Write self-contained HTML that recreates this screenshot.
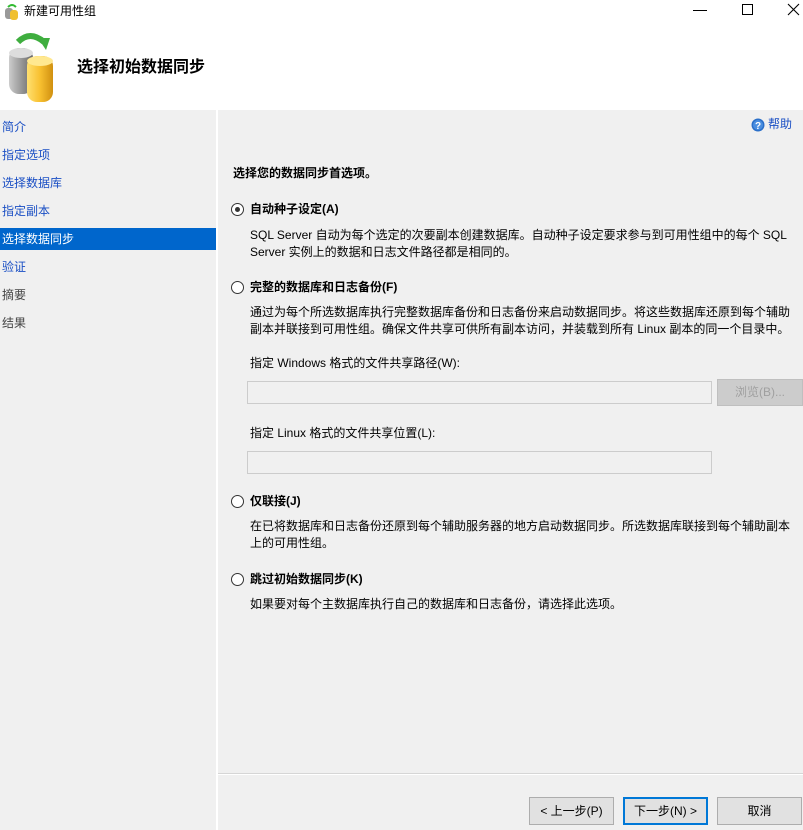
<!DOCTYPE html>
<html><head><meta charset="utf-8"><style>
*{margin:0;padding:0;box-sizing:border-box}
body{width:803px;height:830px;background:#f0f0f0;font-family:"Liberation Sans","Noto Sans CJK SC",sans-serif;font-size:12px;color:#000;position:relative;overflow:hidden}
.a{position:absolute;white-space:nowrap;line-height:17px}
.b{font-weight:bold}
.nav{position:absolute;left:2px;color:#1a4fc4;font-size:12px;line-height:17px}
.r{position:absolute;width:13px;height:13px;border:1px solid #333;border-radius:50%;background:#fff}
.box{position:absolute;border:1px solid #ccc;background:#f0f0f0}
.btn{position:absolute;top:797px;height:28px;border:1px solid #adadad;background:#e1e1e1;text-align:center;line-height:26px;font-size:12px}
</style></head><body>
<div style="position:absolute;left:0;top:0;width:803px;height:110px;background:#fff"></div>
<svg class="a" style="left:4px;top:3px" width="16" height="18" viewBox="0 0 16 18"><rect x="1" y="5" width="8" height="11" rx="3" fill="#999"/><rect x="6" y="7" width="8" height="10" rx="3" fill="#f0c030"/><path d="M4 4 Q8 0 12 4" stroke="#3b3" stroke-width="2" fill="none"/></svg>
<div class="a" style="left:24px;top:3px;font-size:12px">新建可用性组</div>
<div class="a" style="left:693px;top:10px;width:14px;height:1px;background:#000"></div>
<div class="a" style="left:742px;top:4px;width:11px;height:11px;border:1px solid #000"></div>
<svg class="a" style="left:787px;top:3px" width="13" height="13"><path d="M1 1L12 12M12 1L1 12" stroke="#000" stroke-width="1.1"/></svg>
<svg class="a" style="left:6px;top:32px" width="52" height="72" viewBox="0 0 52 72">
<defs><linearGradient id="g1" x1="0" x2="1"><stop offset="0" stop-color="#ccc"/><stop offset=".5" stop-color="#999"/><stop offset="1" stop-color="#666"/></linearGradient>
<linearGradient id="g2" x1="0" x2="1"><stop offset="0" stop-color="#ffe070"/><stop offset=".5" stop-color="#f8c030"/><stop offset="1" stop-color="#d09010"/></linearGradient></defs>
<path d="M12 10 Q24 -2 38 10" stroke="#3fae3f" stroke-width="6" fill="none"/><path d="M32 6 L44 6 L40 18 Z" fill="#3fae3f"/>
<rect x="3" y="16" width="24" height="46" rx="10" fill="url(#g1)"/><ellipse cx="15" cy="21" rx="12" ry="5" fill="#ddd"/>
<rect x="21" y="24" width="26" height="46" rx="10" fill="url(#g2)"/><ellipse cx="34" cy="29" rx="13" ry="5" fill="#ffe890"/></svg>
<div class="a b" style="left:77px;top:58px;font-size:16px;line-height:19px">选择初始数据同步</div>
<div style="position:absolute;left:216px;top:110px;width:2px;height:720px;background:#fff"></div>
<div style="position:absolute;left:0;top:228px;width:216px;height:22px;background:#0066cc"></div>
<div class="nav" style="top:119px">简介</div>
<div class="nav" style="top:147px">指定选项</div>
<div class="nav" style="top:175px">选择数据库</div>
<div class="nav" style="top:203px">指定副本</div>
<div class="nav" style="top:231px;color:#fff">选择数据同步</div>
<div class="nav" style="top:259px">验证</div>
<div class="nav" style="top:287px;color:#444">摘要</div>
<div class="nav" style="top:315px;color:#444">结果</div>
<svg class="a" style="left:751px;top:118px" width="14" height="14"><circle cx="7" cy="7" r="6.5" fill="#2a6fc9"/><circle cx="7" cy="7" r="5" fill="#4a8ee0"/><text x="7" y="11" font-size="10" font-weight="bold" fill="#fff" text-anchor="middle" font-family="Liberation Sans">?</text></svg>
<div class="a" style="left:768px;top:116px;color:#1a4fc4">帮助</div>
<div class="a b" style="left:233px;top:165px">选择您的数据同步首选项。</div>
<div class="r" style="left:231px;top:203px"></div><div style="position:absolute;left:235px;top:207px;width:5px;height:5px;border-radius:50%;background:#333"></div>
<div class="a b" style="left:250px;top:201px">自动种子设定(A)</div>
<div class="a" style="left:250px;top:227px">SQL Server 自动为每个选定的次要副本创建数据库。自动种子设定要求参与到可用性组中的每个 SQL</div>
<div class="a" style="left:250px;top:244px">Server 实例上的数据和日志文件路径都是相同的。</div>
<div class="r" style="left:231px;top:281px"></div>
<div class="a b" style="left:250px;top:279px">完整的数据库和日志备份(F)</div>
<div class="a" style="left:250px;top:304px">通过为每个所选数据库执行完整数据库备份和日志备份来启动数据同步。将这些数据库还原到每个辅助</div>
<div class="a" style="left:250px;top:321px">副本并联接到可用性组。确保文件共享可供所有副本访问，并装载到所有 Linux 副本的同一个目录中。</div>
<div class="a" style="left:250px;top:355px">指定 Windows 格式的文件共享路径(W):</div>
<div class="box" style="left:247px;top:381px;width:465px;height:23px"></div>
<div class="box" style="left:717px;top:379px;width:86px;height:27px;border-color:#bfbfbf;background:#ccc;color:#a0a0a0;text-align:center;line-height:25px">浏览(B)...</div>
<div class="a" style="left:250px;top:425px">指定 Linux 格式的文件共享位置(L):</div>
<div class="box" style="left:247px;top:451px;width:465px;height:23px"></div>
<div class="r" style="left:231px;top:495px"></div>
<div class="a b" style="left:250px;top:493px">仅联接(J)</div>
<div class="a" style="left:250px;top:518px">在已将数据库和日志备份还原到每个辅助服务器的地方启动数据同步。所选数据库联接到每个辅助副本</div>
<div class="a" style="left:250px;top:535px">上的可用性组。</div>
<div class="r" style="left:231px;top:573px"></div>
<div class="a b" style="left:250px;top:571px">跳过初始数据同步(K)</div>
<div class="a" style="left:250px;top:596px">如果要对每个主数据库执行自己的数据库和日志备份，请选择此选项。</div>
<div style="position:absolute;left:218px;top:773px;width:585px;height:1px;background:#d6d6d6"></div>
<div style="position:absolute;left:218px;top:774px;width:585px;height:1px;background:#fff"></div>
<div class="btn" style="left:529px;width:85px">&lt; 上一步(P)</div>
<div class="btn" style="left:623px;width:85px;border:2px solid #0078d7;line-height:24px">下一步(N) &gt;</div>
<div class="btn" style="left:717px;width:85px">取消</div>
</body></html>
